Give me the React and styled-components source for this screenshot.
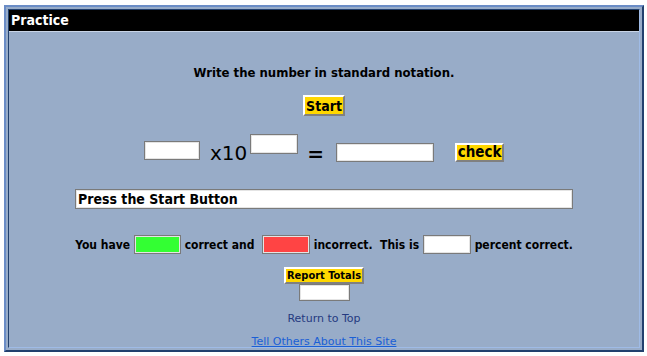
import React from 'react';
import styled, { createGlobalStyle } from 'styled-components';

const Global = createGlobalStyle`
  body {
    margin: 0;
    background: #fff;
    font-family: "DejaVu Sans Condensed", "DejaVu Sans", sans-serif;
  }
`;

const Page = styled.div`
  padding: 5px 0 0 4px;
`;

const Frame = styled.div`
  width: 640px;
  height: 347px;
  box-sizing: border-box;
  border: 2px solid;
  border-color: #6a8cc6 #22406e #22406e #6a8cc6;
  padding: 2px;
  background: #98acc8;
`;

const Cell = styled.div`
  height: 100%;
  box-sizing: border-box;
  border: 1px solid;
  border-color: #22406e #9fbbe6 #9fbbe6 #22406e;
  display: flex;
  flex-direction: column;
  align-items: center;
`;

const Header = styled.div`
  align-self: stretch;
  height: 23px;
  background: #000;
  border-bottom: 1px solid #c8d4e6;
  color: #fff;
  font-weight: bold;
  font-size: 14px;
  line-height: 21px;
  padding-left: 2px;
`;

const Title = styled.div`
  margin-top: 33px;
  font-weight: bold;
  font-size: 13px;
  line-height: 16px;
  color: #000;
`;

const Button = styled.button`
  font-family: inherit;
  font-weight: bold;
  font-size: ${p => p.$size || 13}px;
  color: #000;
  background: #ffd700;
  border: 2px solid;
  border-color: #fff #808080 #808080 #fff;
  padding: 0;
  height: ${p => p.$h || 21}px;
  width: ${p => p.$w}px;
  line-height: 1;
  white-space: nowrap;
  margin-top: ${p => p.$top || 0}px;
  margin-left: ${p => p.$left || 0}px;
  cursor: pointer;
  flex: none;
`;

const EquationRow = styled.div`
  margin-top: 18px;
  display: flex;
  align-items: flex-start;
  height: 28px;
`;

const Box = styled.div`
  box-sizing: border-box;
  width: ${p => p.$w}px;
  height: ${p => p.$h || 19}px;
  margin-top: ${p => p.$top || 0}px;
  margin-left: ${p => p.$left || 0}px;
  background: ${p => p.$bg || '#fff'};
  border: 1px solid #7a7a7a;
  box-shadow: inset 0 0 0 1px #e4e4e4;
  flex: none;
`;

const Big = styled.span`
  font-family: "DejaVu Sans", sans-serif;
  font-size: 20px;
  font-weight: ${p => (p.$bold ? 'bold' : 'normal')};
  line-height: 20px;
  margin-top: ${p => p.$top || 0}px;
  margin-left: ${p => p.$left || 0}px;
  color: #000;
`;

const Status = styled.div`
  box-sizing: border-box;
  margin-top: 27px;
  width: 498px;
  height: 20px;
  background: #fff;
  border: 1px solid #7a7a7a;
  box-shadow: inset 0 0 0 1px #e4e4e4;
  font-weight: bold;
  font-size: 14px;
  line-height: 18px;
  padding-left: 2px;
  color: #000;
`;

const ScoreRow = styled.div`
  margin-top: 26px;
  display: flex;
  align-items: center;
  font-weight: bold;
  font-size: 12px;
  color: #000;
  white-space: pre;
`;

const Totals = styled.div`
  margin-top: 13px;
  display: flex;
  flex-direction: column;
  align-items: center;
`;

const Plain = styled.a`
  margin-top: ${p => p.$top}px;
  font-family: "DejaVu Sans", sans-serif;
  font-size: 11px;
  line-height: 13px;
  color: ${p => p.$color};
  text-decoration: ${p => (p.$line ? 'underline' : 'none')};
`;

export default function App() {
  return (
    <>
      <Global />
      <Page>
        <Frame>
          <Cell>
            <Header>Practice</Header>
            <Title>Write the number in standard notation.</Title>
            <Button $top={14} $w={42} $size={14}>Start</Button>
            <EquationRow>
              <Box $w={56} $top={7} />
              <Big $top={9} $left={10}>x10</Big>
              <Box $w={48} $h={20} $left={3} />
              <Big $bold $top={10} $left={9}>=</Big>
              <Box $w={98} $top={9} $left={12} />
              <Button $top={9} $w={49} $h={19} $size={15} $left={21}>check</Button>
            </EquationRow>
            <Status>Press the Start Button</Status>
            <ScoreRow>
              You have <Box $w={47} $bg="#33ff33" /> correct and  <Box $w={48} $bg="#ff4444" /> incorrect.  This is <Box $w={48} /> percent correct.
            </ScoreRow>
            <Totals>
              <Button $w={80} $h={17} $size={11}>Report Totals</Button>
              <Box $w={51} $h={17} />
            </Totals>
            <Plain $top={11} $color="#253a80">Return to Top</Plain>
            <Plain $top={10} $color="#1a5fd6" $line href="#">Tell Others About This Site</Plain>
          </Cell>
        </Frame>
      </Page>
    </>
  );
}
